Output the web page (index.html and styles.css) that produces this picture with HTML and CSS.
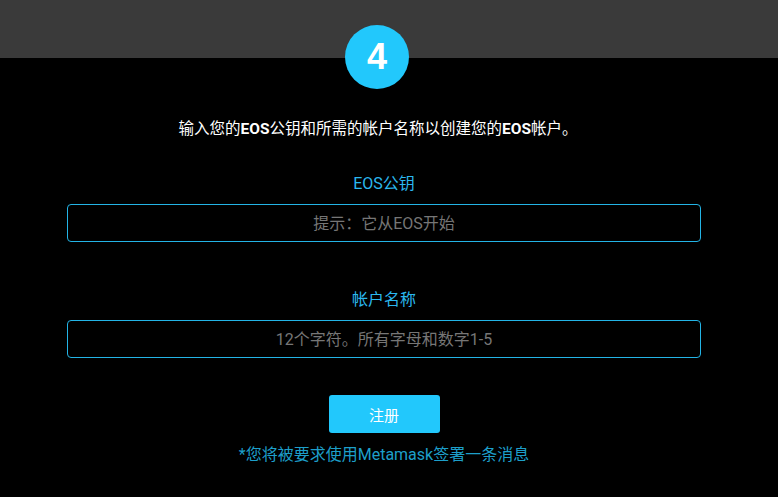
FILE: index.html
```html
<!DOCTYPE html>
<html lang="zh">
<head>
<meta charset="utf-8">
<link rel="stylesheet" href="styles.css">
</head>
<body>
<div class="topband"></div>
<main class="panel">
  <div class="step">4</div>
  <p class="intro">输入您的<b>EOS</b>公钥和所需的帐户名称以创建您的<b>EOS</b>帐户。</p>
  <form class="form">
    <label class="field">
      <span class="label">EOS公钥</span>
      <input class="input" type="text" placeholder="提示：它从EOS开始">
    </label>
    <label class="field">
      <span class="label">帐户名称</span>
      <input class="input" type="text" placeholder="12个字符。所有字母和数字1-5">
    </label>
    <button class="btn" type="button">注册</button>
    <p class="note">*您将被要求使用Metamask签署一条消息</p>
  </form>
</main>
</body>
</html>
```
FILE: styles.css
```css
* { box-sizing: border-box; }
html, body { margin: 0; padding: 0; background: #000; }
body {
  font-family: Roboto, "Noto Sans CJK SC", sans-serif;
  color: #fff;
  width: 778px;
  height: 497px;
  overflow: hidden;
}
.topband {
  height: 58px;
  background: #3a3a3a;
}
.panel {
  display: flex;
  flex-direction: column;
  align-items: center;
  margin-top: -33px;
  padding: 0 77px 0 67px;
}
.step {
  width: 64px;
  height: 64px;
  border-radius: 50%;
  background: #22c8fc;
  color: #fff;
  font-family: "Liberation Sans", Arial, sans-serif;
  font-weight: 700;
  font-size: 36px;
  display: flex;
  align-items: center;
  justify-content: center;
  margin-left: -14px;
}
.intro {
  margin: 29px 0 0 -12px;
  font-size: 15.5px;
  line-height: 22px;
}
.intro b { font-weight: 700; }
.form {
  width: 634px;
  display: flex;
  flex-direction: column;
  align-items: center;
}
.field {
  width: 100%;
  display: flex;
  flex-direction: column;
  align-items: center;
}
.field:first-child { margin-top: 33px; }
.field + .field { margin-top: 47px; }
.label {
  color: #2bb8ef;
  font-size: 16px;
  line-height: 22px;
  margin-bottom: 9px;
}
.input {
  width: 100%;
  height: 38px;
  background: #000;
  border: 1px solid #23b4e6;
  border-radius: 4px;
  color: #fff;
  font-family: Roboto, "Noto Sans CJK SC", sans-serif;
  font-size: 16px;
  text-align: center;
  outline: none;
}
.input::placeholder { color: #767676; }
.btn {
  margin-top: 37px;
  width: 111px;
  height: 38px;
  background: #22c8fc;
  border: none;
  border-radius: 3px;
  color: #fff;
  font-family: Roboto, "Noto Sans CJK SC", sans-serif;
  font-size: 15px;
}
.note {
  margin: 11px 0 0;
  color: #1d9fca;
  font-size: 16px;
  line-height: 22px;
}
```
